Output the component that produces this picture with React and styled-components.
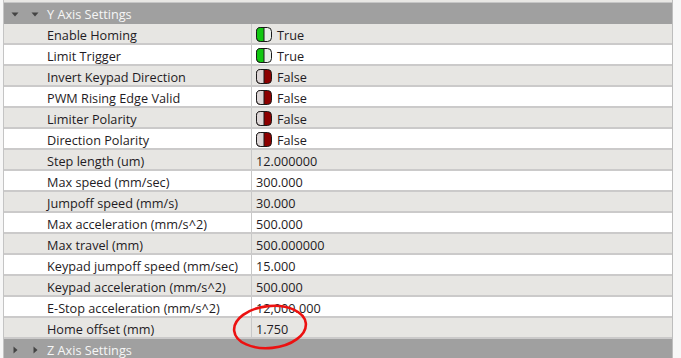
import React from "react";
import styled, { createGlobalStyle } from "styled-components";

const GlobalStyle = createGlobalStyle`
  html, body {
    margin: 0;
    padding: 0;
    background: #f7f7f7;
    font-family: "Open Sans", "Noto Sans", sans-serif;
    font-size: 12.7px;
    overflow: hidden;
  }
`;

const Page = styled.div`
  position: relative;
  width: 681px;
  height: 358px;
  overflow: hidden;
  display: flex;
`;

const Panel = styled.div`
  width: 668px;
  margin-left: 3px;
  border-left: 1px solid #c4c4c4;
  border-right: 1px solid #bdbdbd;
  background: #ffffff;
  display: flex;
  flex-direction: column;
`;

const TopSliver = styled.div`
  height: 2px;
  background: #e8e7e4;
  border-bottom: 1px solid #c6c6c6;
  flex-shrink: 0;
`;

const GroupHeader = styled.div`
  height: 21px;
  flex-shrink: 0;
  display: flex;
  align-items: center;
  background: #a0a0a0;
  color: #f6f6f6;
`;

const Arrows = styled.div`
  display: flex;
  align-items: center;
  gap: 12px;
  padding-left: 7px;
  width: 36px;
`;

const Row = styled.div`
  height: 19px;
  flex-shrink: 0;
  display: flex;
  background: ${(p) => (p.$alt ? "#ffffff" : "#e7e6e3")};
  border-bottom: 2px solid #cbcaca;
  color: #1f1c24;
`;

const Label = styled.div`
  width: 204px;
  padding: 2px 0 0 43px;
  border-right: 1px solid #c8c8c8;
  display: flex;
  align-items: center;
  white-space: nowrap;
`;

const Value = styled.div`
  flex: 1;
  display: flex;
  align-items: center;
  gap: 5px;
  padding: 2px 0 0 4px;
  white-space: nowrap;
`;

const Ellipse = styled.svg`
  position: absolute;
  left: 228px;
  top: 300px;
  overflow: visible;
`;

const Triangle = ({ down }) => (
  <svg width="8" height="8" viewBox="0 0 8 8">
    {down ? (
      <path d="M0.5 2.5 L7.5 2.5 L4 6.5 Z" fill="#444444" />
    ) : (
      <path d="M2.5 0.5 L6.5 4 L2.5 7.5 Z" fill="#444444" />
    )}
  </svg>
);

const Toggle = ({ on }) => (
  <svg width="16" height="15" viewBox="0 0 16 15">
    <rect x="0.5" y="0.5" width="15" height="14" rx="4" fill={on ? "#e9eee9" : "#8c0000"} stroke="#1a1a1a" />
    <path
      d="M4.5 0.5 H8 V14.5 H4.5 A4 4 0 0 1 0.5 10.5 V4.5 A4 4 0 0 1 4.5 0.5 Z"
      fill={on ? "#12c812" : "#ddd6d6"}
      stroke="#1a1a1a"
    />
  </svg>
);

const rows = [
  ["Enable Homing", true],
  ["Limit Trigger", true],
  ["Invert Keypad Direction", false],
  ["PWM Rising Edge Valid", false],
  ["Limiter Polarity", false],
  ["Direction Polarity", false],
  ["Step length (um)", "12.000000"],
  ["Max speed (mm/sec)", "300.000"],
  ["Jumpoff speed (mm/s)", "30.000"],
  ["Max acceleration (mm/s^2)", "500.000"],
  ["Max travel (mm)", "500.000000"],
  ["Keypad jumpoff speed (mm/sec)", "15.000"],
  ["Keypad acceleration (mm/s^2)", "500.000"],
  ["E-Stop acceleration (mm/s^2)", "12,000.000"],
  ["Home offset (mm)", "1.750"],
];

export default function App() {
  return (
    <Page>
      <GlobalStyle />
      <Panel>
        <TopSliver />
        <GroupHeader>
          <Arrows>
            <Triangle down />
            <Triangle down />
          </Arrows>
          Y Axis Settings
        </GroupHeader>
        {rows.map(([label, value], i) => (
          <Row key={label} $alt={i % 2 === 1}>
            <Label>{label}</Label>
            <Value>
              {typeof value === "boolean" ? (
                <>
                  <Toggle on={value} />
                  {value ? "True" : "False"}
                </>
              ) : (
                value
              )}
            </Value>
          </Row>
        ))}
        <GroupHeader>
          <Arrows>
            <Triangle />
            <Triangle />
          </Arrows>
          Z Axis Settings
        </GroupHeader>
      </Panel>
      <Ellipse width="84" height="54" viewBox="0 0 84 54">
        <ellipse cx="42" cy="27" rx="36" ry="21" fill="none" stroke="#ec1111" strokeWidth="2.6" transform="rotate(-6 42 27)" />
      </Ellipse>
    </Page>
  );
}
